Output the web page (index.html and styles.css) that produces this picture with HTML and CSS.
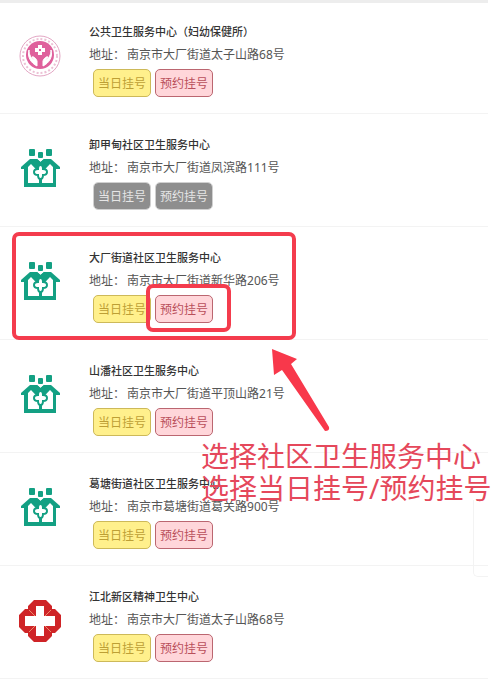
FILE: index.html
```html
<!DOCTYPE html>
<html lang="zh-CN">
<head>
    <meta charset="UTF-8">
    <meta name="viewport" content="width=device-width, initial-scale=1.0">
    <title>预约挂号</title>
    <link rel="stylesheet" href="styles.css">
</head>
<body>
    <!-- 公用图标 -->
    <svg class="icon-defs" aria-hidden="true">
        <symbol id="icon-house" viewBox="0 0 42 42">
            <g fill="#13a083">
                <rect x="10" y="1" width="6" height="7" rx="1"/>
                <rect x="27" y="1" width="6" height="7" rx="1"/>
                <rect x="19" y="4" width="5" height="6" rx="1"/>
                <path d="M11 11H18L21.500 14L25 11H32L41 19V21H37V39H5V21H2V19Z"/>
            </g>
            <path d="M12 16L9 19V35H34V19L31 16L21.500 26Z" fill="#fff"/>
            <path d="M12 14L21.500 23L31 14L25 11L21.500 14L18 11Z" fill="#13a083"/>
            <path d="M21.500 30V37" stroke="#13a083" stroke-width="3"/>
            <path d="M21.500 17Q24 17 24 21Q28 21 28 24Q28 27 24 27Q24 31 21.500 31Q19 31 19 27Q15 27 15 24Q15 21 19 21Q19 17 21.500 17Z" fill="#fff" stroke="#13a083" stroke-width="2"/>
        </symbol>
    </svg>

    <main class="page">
        <ul class="hospital-list">
            <li class="hospital">
                <svg class="hospital-logo" viewBox="0 0 42 42" aria-hidden="true">
                    <circle cx="21" cy="21" r="20" fill="#fff" stroke="#e3a6c4" stroke-width="1"/>
                    <circle cx="21" cy="21" r="17" fill="none" stroke="#ecc0d5" stroke-width="2" stroke-dasharray="2 2"/>
                    <circle cx="21" cy="20" r="14" fill="#df609c"/>
                    <path d="M19 10H23V13H26V17H23V20H19V17H16V13H19Z" fill="#fff"/>
                    <path d="M20 14H22V16H20Z" fill="#df609c"/>
                    <path d="M10 15C8 22 12 28 18 31V26C17 23 14 21 13 22L16 26C12 23 10 20 10 15ZM32 15C34 22 30 28 24 31V26C25 23 28 21 29 22L26 26C30 23 32 20 32 15Z" fill="#fff" stroke="#fff" stroke-width="1"/>
                </svg>
                <div class="hospital-info">
                    <h2>公共卫生服务中心（妇幼保健所）</h2>
                    <p><span>地址：</span>南京市大厂街道太子山路68号</p>
                    <div class="actions">
                        <button type="button" class="btn today">当日挂号</button>
                        <button type="button" class="btn reserve">预约挂号</button>
                    </div>
                </div>
            </li>
            <li class="hospital">
                <svg class="hospital-logo" aria-hidden="true"><use href="#icon-house"/></svg>
                <div class="hospital-info">
                    <h2>卸甲甸社区卫生服务中心</h2>
                    <p><span>地址：</span>南京市大厂街道凤滨路111号</p>
                    <div class="actions">
                        <button type="button" class="btn" disabled>当日挂号</button>
                        <button type="button" class="btn" disabled>预约挂号</button>
                    </div>
                </div>
            </li>
            <li class="hospital">
                <svg class="hospital-logo" aria-hidden="true"><use href="#icon-house"/></svg>
                <div class="hospital-info">
                    <h2>大厂街道社区卫生服务中心</h2>
                    <p><span>地址：</span>南京市大厂街道新华路206号</p>
                    <div class="actions">
                        <button type="button" class="btn today">当日挂号</button>
                        <button type="button" class="btn reserve">预约挂号</button>
                    </div>
                </div>
                <div class="mark mark-row"></div>
                <div class="mark mark-button"></div>
            </li>
            <li class="hospital">
                <svg class="hospital-logo" aria-hidden="true"><use href="#icon-house"/></svg>
                <div class="hospital-info">
                    <h2>山潘社区卫生服务中心</h2>
                    <p><span>地址：</span>南京市大厂街道平顶山路21号</p>
                    <div class="actions">
                        <button type="button" class="btn today">当日挂号</button>
                        <button type="button" class="btn reserve">预约挂号</button>
                    </div>
                </div>
            </li>
            <li class="hospital">
                <svg class="hospital-logo" aria-hidden="true"><use href="#icon-house"/></svg>
                <div class="hospital-info">
                    <h2>葛塘街道社区卫生服务中心</h2>
                    <p><span>地址：</span>南京市葛塘街道葛关路900号</p>
                    <div class="actions">
                        <button type="button" class="btn today">当日挂号</button>
                        <button type="button" class="btn reserve">预约挂号</button>
                    </div>
                </div>
            </li>
            <li class="hospital">
                <svg class="hospital-logo" viewBox="0 0 42 42" aria-hidden="true">
                    <path d="M15 0H27L33 6V9H36L42 15V27L36 33H33V36L27 42H15L9 36V33H6L0 27V15L6 9H9V6Z" fill="#cf2427"/>
                    <path d="M10 10L16 16M32 10L26 16M10 32L16 26M32 32L26 26" stroke="#ec8a6a" stroke-width="1"/>
                    <path d="M17 6H25V16H36V26H25V36H17V26H6V16H17Z" fill="#fff"/>
                </svg>
                <div class="hospital-info">
                    <h2>江北新区精神卫生中心</h2>
                    <p><span>地址：</span>南京市大厂街道太子山路68号</p>
                    <div class="actions">
                        <button type="button" class="btn today">当日挂号</button>
                        <button type="button" class="btn reserve">预约挂号</button>
                    </div>
                </div>
            </li>
        </ul>

        <!-- 操作说明 -->
        <div class="side-panel"></div>
        <svg class="arrow" viewBox="0 0 60 84" aria-hidden="true">
            <path d="M1 1L26 11L20 16L58 79Q59 83 54 83L11 22L3 27Z" fill="#f8384b"/>
        </svg>
        <p class="tip">选择社区卫生服务中心<br>选择当日挂号/预约挂号</p>
    </main>
</body>
</html>
```

FILE: styles.css
```css
body {
    font-family: "Noto Sans", "Noto Sans CJK SC", sans-serif;
    margin: 0;
    background-color: #fff;
    color: #444;
}

h2,
p,
ul {
    margin: 0;
    padding: 0;
}

.icon-defs {
    position: absolute;
    width: 0;
    height: 0;
}

.page {
    position: relative;
}

.hospital-list {
    list-style: none;
    margin-right: 12px;
    border-top: 3px solid #ededed;
}

/* 医院列表 */
.hospital {
    position: relative;
    display: flex;
    align-items: flex-start;
    gap: 28px;
    padding: 22px 19px 16px;
    border-bottom: 1px solid #f3f3f3;
}

.hospital:first-child {
    padding-top: 20px;
}

.hospital-logo {
    flex: none;
    width: 42px;
    height: 42px;
    margin-top: 12px;
}

.hospital-info h2 {
    font-size: 11px;
    line-height: 18px;
    font-weight: 500;
    color: #333;
}

.hospital-info p {
    font-size: 12px;
    line-height: 28px;
    color: #555;
}

.hospital-info p span {
    margin-right: 2px;
}

.actions {
    display: flex;
    gap: 4px;
    padding-left: 4px;
}

.btn {
    width: 58px;
    height: 28px;
    padding: 2px 0 0;
    border: 1px solid;
    border-radius: 5px;
    font-family: inherit;
    font-size: 12px;
    line-height: 24px;
    cursor: pointer;
}

.today {
    background-color: #fff08c;
    border-color: #cdb959;
    color: #bd9f35;
}

.reserve {
    background-color: #ffd6da;
    border-color: #bb6670;
    color: #b94f5a;
}

.btn:disabled {
    background-color: #8e8e8e;
    background-clip: padding-box;
    border-color: #d0d0d0;
    color: #e6e6e6;
    cursor: default;
}

/* 红色标注 */
.mark {
    position: absolute;
    box-sizing: border-box;
    border: 4px solid #f43c4d;
    border-radius: 7px;
}

.mark-row {
    left: 12px;
    top: 5px;
    width: 284px;
    height: 108px;
}

.mark-button {
    left: 146px;
    top: 57px;
    width: 85px;
    height: 48px;
}

.arrow {
    position: absolute;
    left: 271px;
    top: 348px;
    width: 60px;
    height: 84px;
}

.tip {
    position: absolute;
    left: 201px;
    top: 440px;
    font-size: 28px;
    line-height: 32px;
    white-space: nowrap;
    color: #e5485b;
}

.side-panel {
    position: absolute;
    right: 12px;
    top: 500px;
    width: 14px;
    height: 76px;
    border: 1px solid #f3f3f3;
    border-width: 0 0 1px 1px;
    border-bottom-left-radius: 5px;
}
```
